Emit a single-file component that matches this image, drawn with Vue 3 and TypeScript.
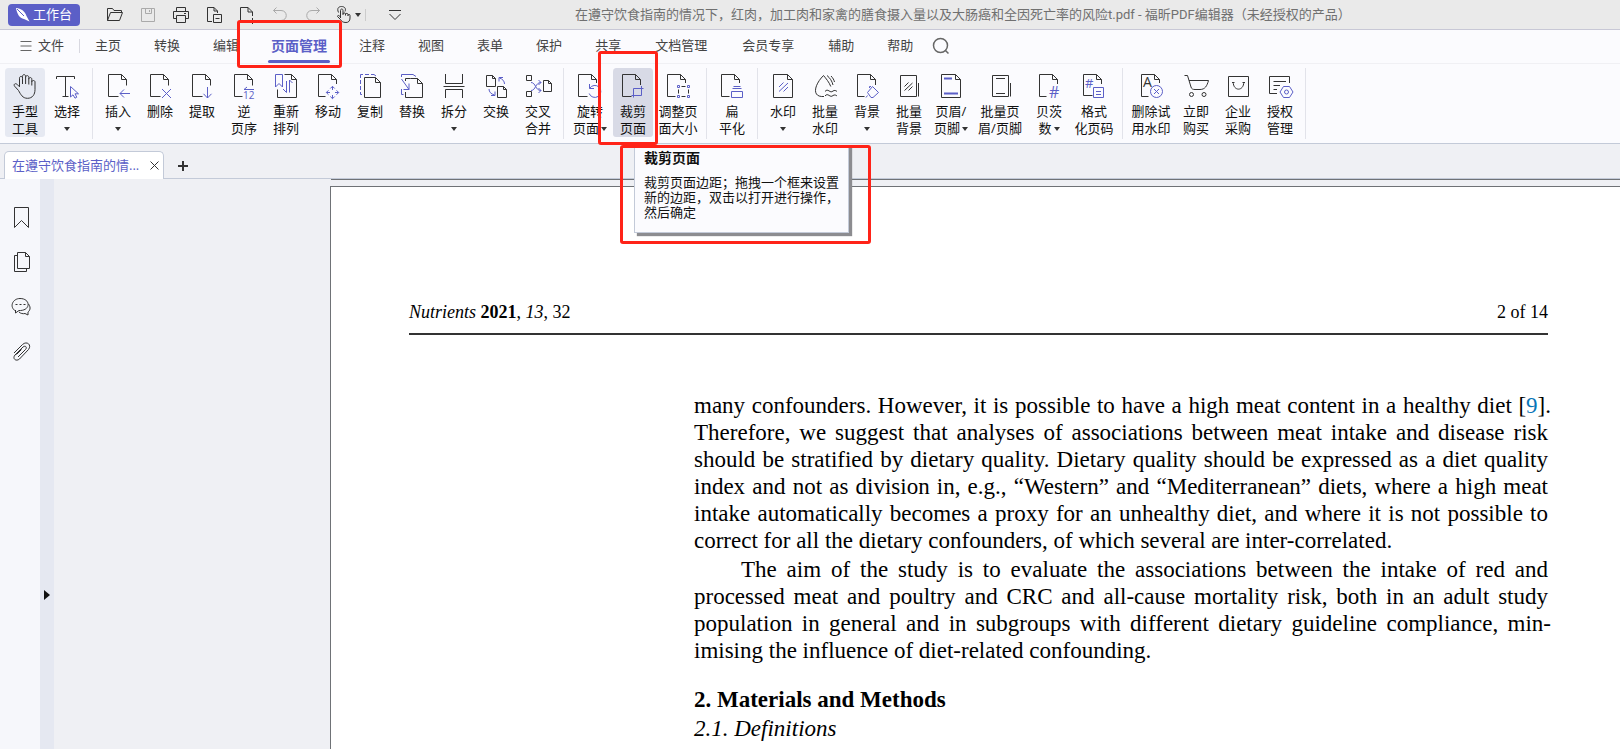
<script setup lang="ts">
interface Icon {
  dark?: string
  blue?: string
  bold?: string
  text?: { value: string; x: number; y: number; size: number; dark?: boolean }
}
interface Tool {
  lines: string[]
  icon: string
  caret?: boolean
  width?: 'mid' | 'wide' | 'broad'
  state?: 'held' | 'hover'
}

const sheet = 'M12.5 22.5H2.5V.5H15.5L20.5 5.5V11.5M15.5 .5V5.5H20.5'
const fullSheet = 'M2.5 .5H16.5L21.5 5.5V23.5H2.5ZM16.5 .5V5.5H21.5'

const icons: Record<string, Icon> = {
  hand: {
    dark: 'M5.5 16.5L1.6 12.2C.2 10.4 2.4 8.8 3.9 10.2L6.5 12.8V4.2C6.5 1.8 9.5 1.8 9.5 4.2V10M9.5 4.2V2.4C9.5 0 12.6 0 12.6 2.4V10M12.6 3.4C12.6 1 15.8 1 15.8 3.4V10.5M15.8 5.2C15.8 3 18.8 3 18.8 5.2V11.5M18.8 8C18.8 6 22 6 22 8V15.5C22 20.5 19.5 24.3 14.5 24.3C9.5 24.3 7.8 20.5 5.5 16.5',
  },
  select: {
    dark: 'M1.5 5V2.5H19.5V5M10.5 2.5V22.5M7.5 22.5H13.5',
    blue: 'M15.5 12.5V23L18 20.8L20 24.2L21.8 23.2L20 19.8H23.5Z',
  },
  insert: { dark: sheet, blue: 'M24 19.5H14M18 15.5L14 19.5L18 23.5' },
  remove: { dark: sheet, blue: 'M14 15L23 24M23 15L14 24' },
  extract: { dark: sheet, blue: 'M17.5 13V24M13.5 19.8L17.5 24L21.5 19.8' },
  reverse: {
    dark: 'M10.5 22.5H2.5V.5H15.5L20.5 5.5V11.5M15.5 .5V5.5H20.5',
    blue: 'M22 15.5H12L15 13',
    text: { value: '12', x: 11, y: 25, size: 10 },
  },
  reorder: {
    dark: 'M10.5 .5H17.5L22.5 5.5V23.5H3.5V15.5M17.5 .5V5.5H22.5',
    blue: 'M1.5 .5H8.5V13L5 9.5L1.5 13ZM12.5 7V18.5L9 15M15.5 18.5V6L18.5 9',
  },
  move: {
    dark: 'M9.5 22.5H2.5V.5H15.5L20.5 5.5V10M15.5 .5V5.5H20.5',
    blue: 'M16.5 12.5V16M16.5 21V24.5M10.5 18.5H14M19 18.5H22.5M14.3 14.5L16.5 12.3L18.7 14.5M14.3 22.5L16.5 24.7L18.7 22.5M12.5 16.3L10.3 18.5L12.5 20.7M20.5 16.3L22.7 18.5L20.5 20.7',
  },
  copy: {
    dark: 'M6.5 3.5H17.5L22.5 8.5V23.5H6.5ZM17.5 3.5V8.5H22.5',
    blue: 'M4 20.5H2.5V18M2.5 16V12M2.5 10V6M2.5 4V.5H5M7 .5H11M13 .5H16L18 2',
  },
  replace: {
    dark: 'M10.5 4.5H17.5L22.5 9.5V23.5H5.5V18M17.5 4.5V9.5H22.5M5.5 7V4.5H10.5',
    blue: 'M1.5 3V.5H13L16 2.5M1.5 15V20.5H3.5M1.5 5L9 15.5M3.5 15.5H9V9.5',
  },
  split: { dark: 'M3.5 0V9.5H20.5V0M1.5 12.5H22.5M3.5 24V15.5H20.5V24' },
  swap: {
    dark: 'M2.5 1.5H8.5L11.5 4.5V12.5H2.5ZM8.5 1.5V4.5H11.5M13.5 12.5H19.5L22.5 15.5V23.5H13.5ZM19.5 12.5V15.5H22.5',
    blue: 'M20.5 10C20.5 7 18.5 5 15.5 4M19 3.5H15V7.5M5 15C5 18 7 20 10.5 21M7 21.5H11V17.5',
  },
  cross: {
    dark: 'M.5 1.5H5.5V6.5H.5ZM.5 17.5H5.5V22.5H.5ZM17.5 6.5H22.5L25.5 9.5V17.5H17.5ZM22.5 6.5V9.5H25.5',
    blue: 'M5 8.5C10 8.5 9 16.5 15 16.5M5 16.5C10 16.5 9 8.5 15 8.5M12.5 6L15 8.5L12.5 11M12.5 14L15 16.5L12.5 19',
  },
  rotate: {
    dark: 'M9.5 22.5H.5V.5H13.5L18.5 5.5V9M13.5 .5V5.5H18.5',
    blue: 'M11.5 10V14.5H16M11.7 14.3A6 6 0 1 1 11.2 19.5',
  },
  crop: {
    dark: 'M10.5 22.5H1.5V.5H14.5L19.5 5.5V11M14.5 .5V5.5H19.5',
    blue: 'M12.5 14.5V23.5M10.5 21.5H20.5V12M12.5 14.5H22.5',
  },
  resize: {
    dark: 'M9.5 22.5H1.5V.5H14.5L19.5 5.5V9M14.5 .5V5.5H19.5M15.5 12.5H19.5M15.5 22.5H19.5M12.5 15.5V19.5M22.5 15.5V19.5',
    blue: 'M11.5 11.5h2v2h-2zM21.5 11.5h2v2h-2zM11.5 21.5h2v2h-2zM21.5 21.5h2v2h-2z',
  },
  flatten: {
    dark: 'M9.5 22.5H1.5V.5H14.5L19.5 5.5V9M14.5 .5V5.5H19.5',
    blue: 'M13.5 12.5H20.5M12.5 14.5H21.5M11.5 17.5H22.5V23.5H11.5Z',
  },
  watermark: { dark: fullSheet, blue: 'M8 13L12.5 8.5M8 17.5L17 9M12.5 17.5L17 13' },
  batchWatermark: {
    dark: 'M11 22.5C-1.5 23.500 1 11 10.5 1.5C13 4.5 16 8 17.8 12.5M14 1.5C17 4 19 7 20 11M18 2C20 4 21 6 21.5 8M12 17.5C15 13.5 17 20 20 17C21.5 16 23 16.5 24 17.5M12 22C15 18 17 24.5 20 21.5C21.5 20.5 23 21 24 22',
  },
  background: {
    dark: 'M9.5 22.5H2.5V.5H15.5L20.5 5.5V11M15.5 .5V5.5H20.5',
    blue: 'M17.5 12.5L23.5 18.5L18 23.5H16L12.5 18.5ZM14.5 14V12.5H16M12.5 21.5L11 23.5',
  },
  batchBackground: { dark: 'M3.5 1.5H19.5V22.5H3.5ZM21.5 9V22.5M7.5 12.5L11.5 8.5M7.5 16.5L15.5 9M11.5 16.5L15.5 12.5' },
  header: { dark: fullSheet, bold: 'M5 4.5H13M5 19.5H19' },
  batchHeader: { dark: 'M4.5 1.5H20.5V22.5H4.5ZM22.5 9V22.5M8 4.5H17M8 19.5H17' },
  bates: { dark: 'M9.5 22.5H2.5V.5H15.5L20.5 5.5V10M15.5 .5V5.5H20.5', text: { value: '#', x: 12, y: 24, size: 16 } },
  format: {
    dark: 'M10.5 21.5H1.5V.5H14.5L19.5 5.5V10M14.5 .5V5.5H19.5',
    blue: 'M11.5 13.5H21.5V23.5H11.5ZM14 17.5H19M14 20.5H19',
    text: { value: '#', x: 3, y: 14, size: 13 },
  },
  trial: {
    dark: 'M9.5 22.5H2.5V.5H15.5L20.5 5.5V9M15.5 .5V5.5H20.5',
    blue: 'M23.5 17.5A6 6 0 1 1 11.5 17.5A6 6 0 1 1 23.5 17.5ZM15 15L20 20M20 15L15 20',
    text: { value: 'A', x: 4, y: 13, size: 14, dark: true },
  },
  cart: {
    dark: 'M.5 1.5H3.5L7 13C7.5 15 9 15.5 11 15.5H16C21 15.5 23 12 24.5 6.5H5M9.5 20.5A2 2 0 1 1 5.5 20.5A2 2 0 1 1 9.5 20.5ZM22 20.5A2 2 0 1 1 18 20.5A2 2 0 1 1 22 20.5Z',
  },
  bag: { dark: 'M2.5 2.5H22.5V22.5H2.5ZM6 8.5H8.5M16.5 8.5H19M7.2 8C7.2 17.5 17.8 17.5 17.8 8' },
  licence: {
    dark: 'M9 19.5H1.5V2.5H21.5V9M5.5 7.5H18M5.5 11.5H12M5.5 15.5H9',
    blue: 'M15.5 12.5H21.5L25 18L21.5 23.5H15.5L12 18ZM20.5 18A2 2 0 1 1 16.5 18A2 2 0 1 1 20.5 18Z',
  },
}

const groups: Tool[][] = [
  [
    { lines: ['手型', '工具'], icon: 'hand', state: 'held' },
    { lines: ['选择'], icon: 'select', caret: true },
  ],
  [
    { lines: ['插入'], icon: 'insert', caret: true },
    { lines: ['删除'], icon: 'remove' },
    { lines: ['提取'], icon: 'extract' },
    { lines: ['逆', '页序'], icon: 'reverse' },
    { lines: ['重新', '排列'], icon: 'reorder' },
    { lines: ['移动'], icon: 'move' },
    { lines: ['复制'], icon: 'copy' },
    { lines: ['替换'], icon: 'replace' },
    { lines: ['拆分'], icon: 'split', caret: true },
    { lines: ['交换'], icon: 'swap' },
    { lines: ['交叉', '合并'], icon: 'cross' },
  ],
  [
    { lines: ['旋转', '页面'], icon: 'rotate', caret: true, width: 'mid' },
    { lines: ['裁剪', '页面'], icon: 'crop', state: 'hover' },
    { lines: ['调整页', '面大小'], icon: 'resize', width: 'wide' },
  ],
  [{ lines: ['扁', '平化'], icon: 'flatten' }],
  [
    { lines: ['水印'], icon: 'watermark', caret: true },
    { lines: ['批量', '水印'], icon: 'batchWatermark' },
    { lines: ['背景'], icon: 'background', caret: true },
    { lines: ['批量', '背景'], icon: 'batchBackground' },
    { lines: ['页眉/', '页脚'], icon: 'header', caret: true },
    { lines: ['批量页', '眉/页脚'], icon: 'batchHeader', width: 'broad' },
    { lines: ['贝茨', '数'], icon: 'bates', caret: true },
    { lines: ['格式', '化页码'], icon: 'format', width: 'wide' },
  ],
  [
    { lines: ['删除试', '用水印'], icon: 'trial', width: 'wide' },
    { lines: ['立即', '购买'], icon: 'cart' },
    { lines: ['企业', '采购'], icon: 'bag' },
    { lines: ['授权', '管理'], icon: 'licence' },
  ],
]

const menus = ['主页', '转换', '编辑', '页面管理', '注释', '视图', '表单', '保护', '共享', '文档管理', '会员专享', '辅助', '帮助']
const activeMenu = '页面管理'

const quick = [
  { name: '打开', d: 'M1.5 14.5V2.5H6.5L8 4.5H15.5V6.5M1.5 14.5H13.5L16.5 6.5H4.5L1.5 14.5' },
  { name: '保存', dim: true, d: 'M2.5 2.5H15.5V15.5H2.5ZM6.5 2.5V7.5H12.5V2.5M10.5 4V6' },
  { name: '打印', d: 'M4.5 5.5V1.5H13.5V5.5M4.5 12.5H1.5V5.5H16.5V12.5H13.5M4.5 9.5H13.5V16.5H4.5ZM12 7.5H14' },
  { name: '页面导出', d: 'M7 15.5H2.5V1.5H9L12.5 5V7M9 1.5V5H12.5M8.5 8.5H16.5V16.5H8.5ZM10.5 12.5H14.5' },
  { name: '新建', d: 'M8 15.5H2.5V1.5H10L14.5 6V10M10 1.5V6H14.5M14.5 12V18M11.5 14.5H17.5' },
  { name: '撤销', dim: true, d: 'M5.5 1.5L2.5 4.5L5.5 7.5M2.5 4.5H10C17 4.5 17 14.5 10 14.5H8' },
  { name: '重做', dim: true, d: 'M12.5 1.5L15.5 4.5L12.5 7.5M15.5 4.5H8C1 4.5 1 14.5 8 14.5H10' },
]

const panels = [
  { name: '书签', d: 'M4.5 2.5H18.5V22.5L11.5 15.5L4.5 22.5Z' },
  { name: '页面', d: 'M7.5 2.5H15.5L19.5 6.5V18.5H7.5ZM15.5 2.5V6.5H19.5M7.5 5.5H4.5V21.5H16.5V18.5' },
  { name: '注释', d: 'M5.5 16C-1 12 2.5 3.5 10 3.5C20.500 3.5 21 15 10.500 15.500H9L5.500 18V15M18.500 9C21.500 13 19.500 16 18 17V20L15 18.500C13 19 10.500 18.500 9 17M5.500 9.500H7.500M9.500 9.500H11.500M13.500 9.500H15.500' },
  { name: '附件', d: 'M4 13L12.500 4.500C17 .5 22 5 18.500 9.500L9.500 19C6 22 2 18.500 5 15L13 7C15.500 5 17.500 7.500 15.500 9.500L8 17M6.500 14.500L11.500 9.500' },
]
</script>

<template>
  <div class="app">
    <header class="titlebar">
      <button class="workbench" type="button">
        <svg width="14" height="14" viewBox="0 0 14 14" aria-hidden="true">
          <path d="M0 0C5 .5 9 3 10.500 8L13.500 13.500L8 11C3.500 10 1 6 0 0Z" fill="#fff" />
          <path class="nib" d="M1 1L8 8" />
        </svg>
        工作台
      </button>
      <div class="quick">
        <button v-for="q in quick" :key="q.name" type="button" :class="{ dim: q.dim }" :aria-label="q.name">
          <svg width="18" height="18" viewBox="0 0 18 18"><path :d="q.d" /></svg>
        </button>
        <button class="touch" type="button" aria-label="触摸模式">
          <svg width="18" height="18" viewBox="0 0 18 18">
            <path d="M5.500 12V4.500C5.500 2.500 8 2.500 8 4.500V9M8 8C8 6.500 10.500 6.500 10.500 8V9.500M10.500 8.500C10.500 7 13 7 13 8.500V10M13 9.500C13 8 15 8 15 9.500V12C15 15 13.500 16.500 11 16.500C7.500 16.500 6.500 15 5.500 13.500L2.500 10.500C2.500 9 4 9 5.500 11M3.500 6.500C1.500 2 4 .5 6.500 .5C9 .5 11.500 2 10 5.500" />
          </svg>
          <i class="caret"></i>
        </button>
        <button class="more" type="button" aria-label="自定义">
          <svg width="18" height="18" viewBox="0 0 18 18"><path d="M3 4.500H15M3.500 8L9 13.500L14.500 8" /></svg>
        </button>
      </div>
      <div class="caption">在遵守饮食指南的情况下，红肉，加工肉和家禽的膳食摄入量以及大肠癌和全因死亡率的风险t.pdf - 福昕PDF编辑器（未经授权的产品）</div>
    </header>

    <nav class="menubar">
      <button class="file" type="button">
        <svg width="12" height="12" viewBox="0 0 12 12" aria-hidden="true"><path d="M.5 1.500H11.500M.5 6H11.500M.5 10.500H11.500" /></svg>
        文件
      </button>
      <div class="menus">
        <button
          v-for="m in menus"
          :key="m"
          type="button"
          :class="{ active: m === activeMenu, long: m.length > 2 && m !== activeMenu }"
        >{{ m }}</button>
      </div>
      <button class="search" type="button" aria-label="搜索">
        <svg width="18" height="18" viewBox="0 0 18 18"><circle cx="8.500" cy="8.500" r="7" /><path d="M13 13L16.500 16.500" /></svg>
      </button>
    </nav>

    <section class="ribbon">
      <div v-for="(group, g) in groups" :key="g" class="group">
        <button
          v-for="tool in group"
          :key="tool.icon"
          type="button"
          class="tool"
          :class="[tool.width, tool.state]"
        >
          <svg width="24" height="24" viewBox="0 0 24 24" aria-hidden="true">
            <path v-if="icons[tool.icon].dark" class="dark" :d="icons[tool.icon].dark" />
            <path v-if="icons[tool.icon].blue" class="blue" :d="icons[tool.icon].blue" />
            <path v-if="icons[tool.icon].bold" class="blue bold" :d="icons[tool.icon].bold" />
            <text
              v-if="icons[tool.icon].text"
              :class="{ darktext: icons[tool.icon].text!.dark }"
              :x="icons[tool.icon].text!.x"
              :y="icons[tool.icon].text!.y"
              :font-size="icons[tool.icon].text!.size"
            >{{ icons[tool.icon].text!.value }}</text>
          </svg>
          <span>{{ tool.lines[0] }}</span>
          <span class="second">{{ tool.lines[1] }}<i v-if="tool.caret" class="caret"></i></span>
        </button>
      </div>
    </section>

    <div class="tabs">
      <div class="tab">
        <a href="#document">在遵守饮食指南的情...</a>
        <button type="button" aria-label="关闭">
          <svg width="9" height="9" viewBox="0 0 9 9"><path d="M.5 .5L8.500 8.500M8.500 .5L.5 8.500" /></svg>
        </button>
      </div>
      <button class="add" type="button" aria-label="新建标签">
        <svg width="10" height="10" viewBox="0 0 10 10"><path d="M5 0V10M0 5H10" /></svg>
      </button>
    </div>

    <main class="workspace">
      <aside class="panels">
        <button v-for="p in panels" :key="p.name" type="button" :aria-label="p.name">
          <svg width="24" height="24" viewBox="0 0 24 24"><path :d="p.d" /></svg>
        </button>
      </aside>
      <div class="splitter">
        <button type="button" aria-label="展开"></button>
      </div>
      <div class="canvas">
        <div class="previous"></div>
        <article id="document" class="page">
          <div class="running">
            <span><em>Nutrients</em> <b>2021</b>, <em>13</em>, 32</span>
            <span>2 of 14</span>
          </div>
          <div class="copy">
            <p>
              <span class="line hang">many confounders. However, it is possible to have a high meat content in a healthy diet [<a href="#ref9">9</a>].</span>
              <span class="line">Therefore, we suggest that analyses of associations between meat intake and disease risk</span>
              <span class="line">should be stratified by dietary quality. Dietary quality should be expressed as a diet quality</span>
              <span class="line">index and not as division in, e.g., “Western” and “Mediterranean” diets, where a high meat</span>
              <span class="line">intake automatically becomes a proxy for an unhealthy diet, and where it is not possible to</span>
              <span class="line last">correct for all the dietary confounders, of which several are inter-correlated.</span>
            </p>
            <p>
              <span class="line first">The aim of the study is to evaluate the associations between the intake of red and</span>
              <span class="line">processed meat and poultry and CRC and all-cause mortality risk, both in an adult study</span>
              <span class="line hang">population in general and in subgroups with different dietary guideline compliance, min-</span>
              <span class="line last">imising the influence of diet-related confounding.</span>
            </p>
            <h2>2. Materials and Methods</h2>
            <h3>2.1. Definitions</h3>
          </div>
        </article>
      </div>
    </main>

    <div class="tooltip" role="tooltip">
      <strong>裁剪页面</strong>
      <p>裁剪页面边距；拖拽一个框来设置新的边距，双击以打开进行操作，然后确定</p>
    </div>
    <div class="mark mark-menu"></div>
    <div class="mark mark-tool"></div>
    <div class="mark mark-tip"></div>
  </div>
</template>

<style>
body {
  margin: 0;
}
</style>

<style scoped>
.app {
  position: relative;
  display: flex;
  flex-direction: column;
  height: 100vh;
  overflow: hidden;
  background: #eff0f4;
  color: #222;
  font: 13px/17px "Open Sans", "Noto Sans CJK SC", sans-serif;
}
button {
  box-sizing: border-box;
  margin: 0;
  padding: 0;
  border: 0;
  background: none;
  color: inherit;
  font: inherit;
  white-space: nowrap;
}
svg {
  display: block;
  flex: none;
  overflow: visible;
  fill: none;
  stroke: #333;
}
.caret {
  display: inline-block;
  border: 3px solid transparent;
  border-top: 4px solid #333;
  border-bottom: 0;
}

.titlebar {
  display: flex;
  align-items: center;
  flex: none;
  height: 29px;
  border-bottom: 1px solid #c8c8d6;
  background: #eaeaea;
}
.workbench {
  display: flex;
  align-items: center;
  gap: 3px;
  width: 72px;
  height: 22px;
  margin-left: 8px;
  padding-left: 8px;
  border-radius: 4px;
  background: #5b5fc7;
  color: #fff;
}
.workbench svg {
  stroke: none;
}
.workbench .nib {
  stroke: #5b5fc7;
}
.quick {
  display: flex;
  align-items: center;
  margin-left: 18px;
}
.quick button {
  display: flex;
  align-items: center;
  justify-content: center;
  width: 33px;
  height: 24px;
}
.quick .dim svg {
  stroke: #aaa;
}
.quick .touch {
  gap: 2px;
  width: 36px;
  padding-left: 2px;
}
.quick .more {
  width: 46px;
  height: 12px;
  padding-left: 12px;
  border-left: 1px solid #ccc;
}
.caption {
  flex: 1;
  margin-left: 164px;
  color: #707070;
  font-family: Roboto, "Noto Sans CJK SC", sans-serif;
  white-space: nowrap;
}

.menubar {
  display: flex;
  align-items: center;
  flex: none;
  height: 33px;
  border-bottom: 1px solid #f0f0f4;
  background: #fbfbfe;
  color: #444;
}
.file {
  display: flex;
  align-items: center;
  gap: 6px;
  height: 14px;
  margin: 0 0 2px 20px;
  padding-right: 15px;
  border-right: 1px solid #d8d8e0;
}
.file svg,
.search svg {
  stroke: #666;
}
.menus {
  display: flex;
  gap: 33px;
  margin: 0 19px 0 15px;
}
.menus button {
  height: 33px;
  padding-bottom: 2px;
}
.menus .long {
  margin: 0 1px;
}
.menus .active {
  position: relative;
  margin: 0 -1px;
  color: #5b5fc7;
  font-size: 14px;
  font-weight: 700;
}
.menus .active::after {
  position: absolute;
  right: -3px;
  bottom: 0;
  left: -3px;
  height: 3px;
  border-radius: 2px;
  background: #5b5fc7;
  content: "";
}
.search {
  padding-bottom: 2px;
}
.search svg {
  stroke-width: 1.5;
}

.ribbon {
  display: flex;
  flex: none;
  height: 75px;
  padding: 4px 0 0;
  border-bottom: 1px solid #c3cad8;
  background: #fbfbfe;
}
.group {
  display: flex;
  height: 71px;
  padding: 0 4px;
  border-right: 1px solid #e2e3ea;
}
.tool {
  display: flex;
  flex-direction: column;
  align-items: center;
  width: 42px;
  height: 70px;
  padding-top: 6px;
  border: 1px solid transparent;
  border-top: 0;
  border-radius: 4px;
  background-clip: padding-box;
  color: #111;
}
.tool svg {
  margin-bottom: 5px;
}
.mid {
  width: 44px;
}
.wide {
  width: 48px;
}
.broad {
  width: 56px;
}
.held {
  background-color: #e6e9f2;
}
.hover {
  background-color: #d8dae6;
}
.second {
  display: flex;
  align-items: center;
  height: 17px;
  gap: 2px;
}
.blue {
  stroke: #5b5fc7;
}
.bold {
  stroke-width: 2;
}
.tool text {
  fill: #5b5fc7;
  stroke: none;
}
.tool .darktext {
  fill: #333;
}

.tabs {
  display: flex;
  align-items: flex-end;
  flex: none;
  height: 34px;
  border-bottom: 1px solid #c3cad8;
}
.tab {
  display: flex;
  align-items: center;
  box-sizing: border-box;
  width: 160px;
  height: 28px;
  margin: 0 14px -1px 4px;
  padding: 0 4px 0 7px;
  border: 1px solid #c3cad8;
  border-bottom: 0;
  border-radius: 5px 5px 0 0;
  background: #fff;
}
.tab a {
  flex: 1;
  color: #5b5fc7;
  text-decoration: none;
  white-space: nowrap;
}
.add {
  height: 24px;
}
.add svg {
  stroke-width: 2;
}

.workspace {
  display: flex;
  flex: 1;
  min-height: 0;
}
.panels {
  display: flex;
  flex: none;
  flex-direction: column;
  width: 40px;
  padding-top: 15px;
  background: #f6f7fb;
}
.panels button {
  display: flex;
  align-items: center;
  justify-content: center;
  height: 45px;
  padding-left: 3px;
}
.splitter {
  flex: none;
  width: 14px;
  background: #e5e8f1;
}
.splitter button {
  display: block;
  margin: 411px 0 0 4px;
  border: 5px solid transparent;
  border-right: 0;
  border-left: 6px solid #111;
}
.canvas {
  flex: 1;
  min-width: 0;
  padding-left: 276px;
}
.previous {
  height: 6px;
  margin-left: 1px;
  border-top: 1px solid #6f7276;
}
.page {
  min-height: 720px;
  padding: 115px 72px 0 78px;
  border-top: 1px solid #6f7276;
  border-left: 1px solid #6f7276;
  background: #fff;
  color: #000;
  font: 23px/27px "Palatino Linotype", Palatino, "Liberation Serif", serif;
}
.running {
  display: flex;
  justify-content: space-between;
  padding-bottom: 11px;
  border-bottom: 2px solid #333;
  font-size: 18px;
  line-height: 20px;
}
.copy {
  margin-left: 285px;
  padding-top: 57px;
}
.copy p {
  margin: 0 0 2px;
}
.line {
  display: block;
  text-align: justify;
  text-align-last: justify;
  white-space: nowrap;
}
.hang {
  margin-right: -3px;
}
.last {
  text-align-last: left;
}
.first {
  padding-left: 47px;
}
.copy a {
  color: #0875b8;
  text-decoration: none;
}
.copy h2,
.copy h3 {
  margin: 22px 0 0;
  font-size: 23px;
  line-height: 27px;
}
.copy h3 {
  margin-top: 2px;
  font-weight: 400;
  font-style: italic;
}

.tooltip {
  position: absolute;
  top: 145px;
  left: 634px;
  box-sizing: border-box;
  width: 215px;
  padding: 4px 9px 12px;
  border: 1px solid #c3cad8;
  background: #fbfbfe;
  box-shadow: 3px 3px 1px #8c8c90;
  color: #111;
}
.tooltip strong {
  display: block;
  font-size: 14px;
  line-height: 16px;
}
.tooltip p {
  margin: 9px 0 0;
  line-height: 15px;
}
.mark {
  position: absolute;
  box-sizing: border-box;
  border: 3px solid #ff2318;
  border-radius: 3px;
  pointer-events: none;
}
.mark-menu {
  top: 20px;
  left: 237px;
  width: 105px;
  height: 48px;
}
.mark-tool {
  top: 51px;
  left: 598px;
  width: 60px;
  height: 94px;
}
.mark-tip {
  top: 145px;
  left: 620px;
  width: 251px;
  height: 99px;
}
</style>
